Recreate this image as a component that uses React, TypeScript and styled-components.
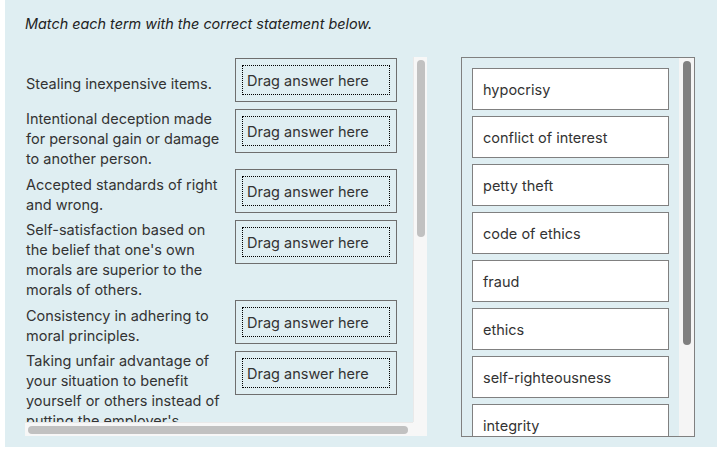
import React from "react";
import styled, { createGlobalStyle } from "styled-components";

const GlobalStyle = createGlobalStyle`
  html, body { margin: 0; padding: 0; background: #ffffff; }
  body { font-family: Inter, "Noto Sans", "Liberation Sans", sans-serif; }
  * { box-sizing: border-box; }
`;

const Page = styled.div`
  width: 712px;
  height: 447px;
  margin-left: 5px;
  background: #dfeef2;
  padding: 15px 0 0 20px;
  overflow: hidden;
`;

const Title = styled.p`
  margin: 0;
  font-style: italic;
  font-size: 14.4px;
  line-height: 18px;
  color: #222;
`;

const Body = styled.div`
  display: flex;
  align-items: flex-start;
  gap: 34px;
  margin-top: 24px;
`;

/* Left scroll area, drawn as viewport + fake scrollbars */
const LeftScroll = styled.div`
  display: grid;
  grid-template-columns: 388px 14px;
  grid-template-rows: 365px 14px;
  width: 402px;
`;

const Viewport = styled.div`
  overflow: hidden;
`;

const VTrack = styled.div<{ $tone: "light" | "dark" }>`
  display: flex;
  flex-direction: column;
  background: ${(p) => (p.$tone === "light" ? "#f7f7f7" : "#f5f5f5")};
  border-left: ${(p) => (p.$tone === "light" ? "1px solid #e9e9e9" : "none")};
  padding: ${(p) => (p.$tone === "light" ? "3px 2px 0 3px" : "3px 3px 0 4px")};
`;

const HTrack = styled.div`
  display: flex;
  align-items: center;
  background: #f7f7f7;
  border-top: 1px solid #e9e9e9;
  padding: 0 0 0 3px;
`;

const Corner = styled.div`
  background: #f7f7f7;
`;

const Thumb = styled.div<{ $tone: "light" | "dark" }>`
  background: ${(p) => (p.$tone === "light" ? "#c1c1c1" : "#7f7f7f")};
  border-radius: 5px;
  flex: none;
`;

const Grid = styled.div`
  display: grid;
  grid-template-columns: 200px 162px;
  column-gap: 10px;
  width: 392px;
  padding-top: 1px;
`;

const Statement = styled.div`
  align-self: center;
  font-size: 14.5px;
  line-height: 20px;
  color: #333;
  padding-left: 1px;
`;

const DropBox = styled.div`
  align-self: start;
  height: 44px;
  margin-bottom: 7px;
  border: 1px solid #6e6e6e;
  padding: 6px;
`;

const DropInner = styled.div`
  height: 100%;
  border: 1px dotted #000;
  padding-left: 4px;
  display: flex;
  align-items: center;
  font-size: 14.5px;
  color: #333;
`;

const RightPanel = styled.div`
  display: flex;
  width: 234px;
  height: 380px;
  border: 1px solid #808080;
`;

const TermList = styled.div`
  flex: 1;
  overflow: hidden;
  padding: 10px;
`;

const Term = styled.div`
  height: 42px;
  margin-bottom: 6px;
  border: 1px solid #808080;
  background: #ffffff;
  padding: 0 10px;
  display: flex;
  align-items: center;
  font-size: 14.5px;
  color: #333;
`;

const RightTrack = styled(VTrack)`
  width: 15px;
  flex: none;
`;

const statements = [
  "Stealing inexpensive items.",
  "Intentional deception made for personal gain or damage to another person.",
  "Accepted standards of right and wrong.",
  "Self-satisfaction based on the belief that one's own morals are superior to the morals of others.",
  "Consistency in adhering to moral principles.",
  "Taking unfair advantage of your situation to benefit yourself or others instead of putting the employer's interests first.",
  "Pretending to have virtues, beliefs or principles that one does not actually possess.",
  "A written set of guidelines that describes acceptable behavior.",
  "Personal beliefs about what is right and wrong.",
  "Principles that guide a person's behavior and choices.",
];

const terms = [
  "hypocrisy",
  "conflict of interest",
  "petty theft",
  "code of ethics",
  "fraud",
  "ethics",
  "self-righteousness",
  "integrity",
  "morals",
  "values",
];

export default function App() {
  return (
    <>
      <GlobalStyle />
      <Page>
        <Title>Match each term with the correct statement below.</Title>
        <Body>
          <LeftScroll>
            <Viewport>
              <Grid>
                {statements.map((s, i) => (
                  <React.Fragment key={i}>
                    <Statement>{s}</Statement>
                    <DropBox>
                      <DropInner>Drag answer here</DropInner>
                    </DropBox>
                  </React.Fragment>
                ))}
              </Grid>
            </Viewport>
            <VTrack $tone="light">
              <Thumb $tone="light" style={{ height: 177 }} />
            </VTrack>
            <HTrack>
              <Thumb $tone="light" style={{ width: 380, height: 8 }} />
            </HTrack>
            <Corner />
          </LeftScroll>
          <RightPanel>
            <TermList>
              {terms.map((t) => (
                <Term key={t}>{t}</Term>
              ))}
            </TermList>
            <RightTrack $tone="dark">
              <Thumb $tone="dark" style={{ height: 284 }} />
            </RightTrack>
          </RightPanel>
        </Body>
      </Page>
    </>
  );
}
